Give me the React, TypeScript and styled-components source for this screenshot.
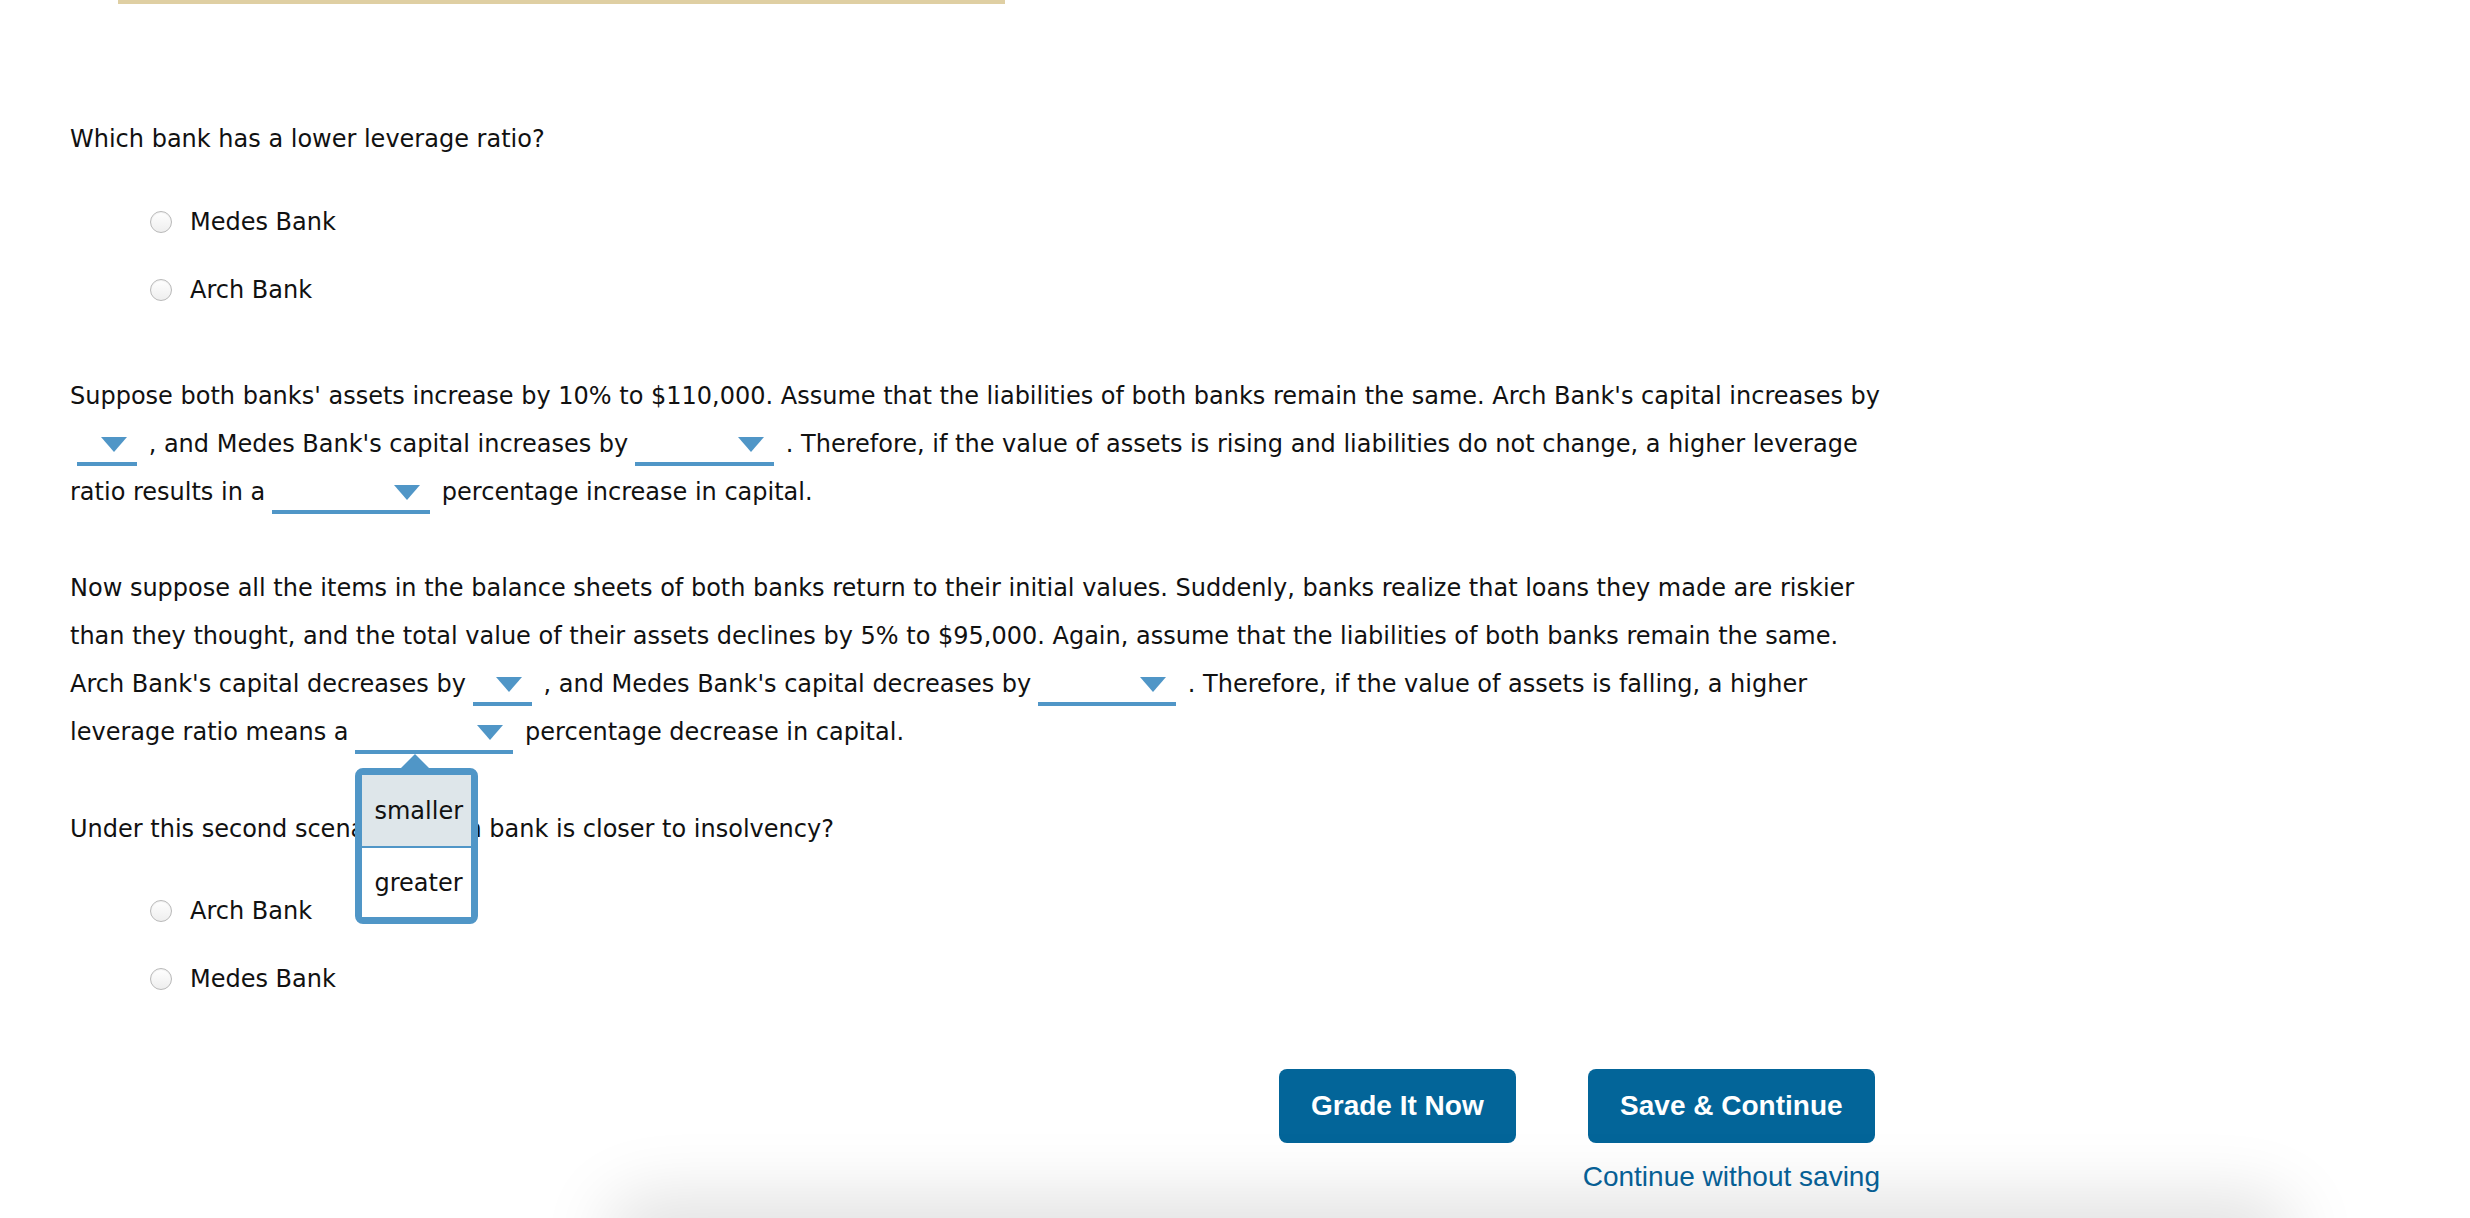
import React from 'react';
import styled, { createGlobalStyle } from 'styled-components';

const GlobalStyle = createGlobalStyle`
  html, body {
    margin: 0;
    padding: 0;
    background: #ffffff;
  }
  body {
    font-family: "DejaVu Sans", Verdana, sans-serif;
    color: #111111;
  }
`;

const blue = '#5096c7';

const Page = styled.div`
  padding: 0 0 80px 70px;
`;

const TopRule = styled.div`
  margin-left: 48px;
  width: 887px;
  height: 4px;
  background: #dfcfa3;
`;

const Prompt = styled.p<{ $top: number }>`
  margin: ${(p) => p.$top}px 0 0;
  font-size: 24px;
  line-height: 48px;
  white-space: nowrap;
`;

const Options = styled.div<{ $top: number }>`
  display: flex;
  flex-direction: column;
  gap: 20px;
  margin-top: ${(p) => p.$top}px;
  padding-left: 80px;
`;

const OptionRow = styled.label`
  display: flex;
  align-items: center;
  gap: 18px;
  height: 48px;
  font-size: 24px;
  cursor: pointer;
`;

const Radio = styled.input.attrs({ type: 'radio' })`
  appearance: none;
  margin: 0;
  width: 22px;
  height: 22px;
  border-radius: 50%;
  border: 1px solid #b9b9b9;
  background: linear-gradient(#ffffff, #eeeeee);
  box-shadow: inset 0 1px 1px rgba(0, 0, 0, 0.06);
`;

const BlankBox = styled.span<{ $width: number }>`
  position: relative;
  display: inline-flex;
  align-items: center;
  justify-content: flex-end;
  box-sizing: border-box;
  width: ${(p) => p.$width}px;
  height: 42px;
  margin: 0 4px 0 7px;
  padding-right: 10px;
  border-bottom: 4px solid ${blue};
  vertical-align: middle;
`;

const Caret = styled.span`
  width: 0;
  height: 0;
  margin-top: 2px;
  border-left: 13px solid transparent;
  border-right: 13px solid transparent;
  border-top: 15px solid ${blue};
`;

const Menu = styled.div`
  position: absolute;
  top: calc(100% + 18px);
  left: 0;
  width: 123px;
  box-sizing: border-box;
  border: 7px solid ${blue};
  border-radius: 8px;
  background: #ffffff;
  z-index: 2;
`;

const MenuArrow = styled.span`
  position: absolute;
  top: -21px;
  left: 39px;
  width: 0;
  height: 0;
  border-left: 14px solid transparent;
  border-right: 14px solid transparent;
  border-bottom: 14px solid ${blue};
`;

const MenuItem = styled.div<{ $active?: boolean }>`
  display: flex;
  align-items: center;
  box-sizing: border-box;
  height: 71px;
  padding-left: 12px;
  font-size: 24px;
  line-height: 1;
  color: #111111;
  background: ${(p) => (p.$active ? '#dee6ea' : '#ffffff')};
  & + & {
    border-top: 2px solid ${blue};
  }
`;

const Actions = styled.div`
  display: flex;
  align-items: flex-start;
  gap: 67px;
  margin: 66px 0 0 1209px;
  font-family: "Liberation Sans", Arial, Helvetica, sans-serif;
`;

const ActionColumn = styled.div`
  display: flex;
  flex-direction: column;
  align-items: center;
  gap: 18px;
`;

const ActionButton = styled.button`
  height: 74px;
  padding: 0 32px;
  border: none;
  border-radius: 8px;
  background: #036599;
  color: #ffffff;
  font-family: inherit;
  font-size: 28px;
  font-weight: 700;
  cursor: pointer;
`;

const TextLink = styled.a`
  font-size: 28px;
  line-height: 32px;
  color: #07639a;
  text-decoration: none;
  cursor: pointer;
`;

const FooterShade = styled.div`
  position: fixed;
  left: 620px;
  right: 190px;
  bottom: -50px;
  height: 50px;
  background: #ffffff;
  box-shadow: 0 -6px 70px 14px rgba(0, 0, 0, 0.13);
  border-radius: 60px;
`;

type BlankProps = {
  width: number;
  options?: string[];
};

const Blank = ({ width, options }: BlankProps) => (
  <BlankBox $width={width}>
    <Caret />
    {options && (
      <Menu>
        <MenuArrow />
        {options.map((option, i) => (
          <MenuItem key={option} $active={i === 0}>
            {option}
          </MenuItem>
        ))}
      </Menu>
    )}
  </BlankBox>
);

const Option = ({ label }: { label: string }) => (
  <OptionRow>
    <Radio name={label} />
    {label}
  </OptionRow>
);

export default function App() {
  return (
    <>
      <GlobalStyle />
      <Page>
        <TopRule />

        <Prompt $top={111}>Which bank has a lower leverage ratio?</Prompt>
        <Options $top={35}>
          <Option label="Medes Bank" />
          <Option label="Arch Bank" />
        </Options>

        <Prompt $top={58}>
          Suppose both banks' assets increase by 10% to $110,000. Assume that the liabilities of
          both banks remain the same. Arch Bank's capital increases by
          <br />
          <Blank width={60} /> , and Medes Bank's capital increases by
          <Blank width={139} /> . Therefore, if the value of assets is rising and liabilities do
          not change, a higher leverage
          <br />
          ratio results in a
          <Blank width={158} /> percentage increase in capital.
        </Prompt>

        <Prompt $top={48}>
          Now suppose all the items in the balance sheets of both banks return to their initial
          values. Suddenly, banks realize that loans they made are riskier
          <br />
          than they thought, and the total value of their assets declines by 5% to $95,000. Again,
          assume that the liabilities of both banks remain the same.
          <br />
          Arch Bank's capital decreases by
          <Blank width={59} /> , and Medes Bank's capital decreases by
          <Blank width={138} /> . Therefore, if the value of assets is falling, a higher
          <br />
          leverage ratio means a
          <Blank width={158} options={['smaller', 'greater']} /> percentage decrease in capital.
        </Prompt>

        <Prompt $top={49}>Under this second scenario, which bank is closer to insolvency?</Prompt>
        <Options $top={34}>
          <Option label="Arch Bank" />
          <Option label="Medes Bank" />
        </Options>

        <Actions>
          <ActionButton>Grade It Now</ActionButton>
          <ActionColumn>
            <ActionButton>Save &amp; Continue</ActionButton>
            <TextLink>Continue without saving</TextLink>
          </ActionColumn>
        </Actions>
      </Page>
      <FooterShade />
    </>
  );
}
